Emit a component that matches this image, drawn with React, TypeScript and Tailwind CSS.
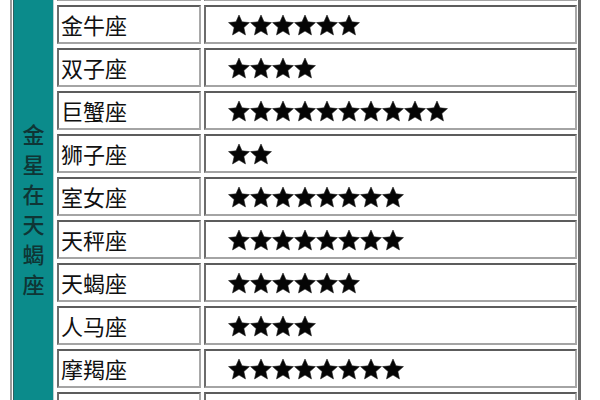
import React from "react";

const rows: [string, number][] = [
  ["白羊座", 6],
  ["金牛座", 6],
  ["双子座", 4],
  ["巨蟹座", 10],
  ["狮子座", 2],
  ["室女座", 8],
  ["天秤座", 8],
  ["天蝎座", 6],
  ["人马座", 4],
  ["摩羯座", 8],
  ["水瓶座", 6],
];

const vertical = ["金", "星", "在", "天", "蝎", "座"];

const cell =
  "h-[39px] flex items-center border-2 border-t-[#5c5c5c] border-l-[#6c6c6c] border-r-[#a8a8a8] border-b-[#a4a4a4] bg-white";

function Star() {
  return (
    <svg width="22" height="22" viewBox="0 0 22 22" className="shrink-0">
      <polygon
        points="11,1 14,7.87 21.46,8.6 15.85,13.58 17.47,20.9 11,17.1 4.53,20.9 6.15,13.58 0.54,8.6 8,7.87"
        fill="#050505"
        stroke="#222"
        strokeWidth="0.6"
        strokeLinejoin="round"
      />
    </svg>
  );
}

export default function App() {
  return (
    <div
      className="h-[400px] w-[600px] overflow-hidden bg-white pl-[10px]"
      style={{ fontFamily: '"Noto Sans CJK SC", "Noto Sans", sans-serif' }}
    >
      <div className="-mt-[40px] flex w-[571px] gap-[3px] border-l-2 border-r-[3px] border-l-[#9a9a9a] border-r-[#6a6a6a] px-px pt-[2px]">
        <div className="flex w-[41px] shrink-0 flex-col items-center border-l border-r border-l-[#2f5f5f] border-r-[#bcd0d0] bg-[#0b8b8b] pt-[156px] text-[22px] leading-[30px] font-medium text-[#0f3535]">
          {vertical.map((c, i) => (
            <span key={i}>{c}</span>
          ))}
        </div>
        <div className="flex flex-1 flex-col gap-[4px]">
          {rows.map(([name, n], i) => (
            <div key={i} className="flex gap-[3px]">
              <div className={`${cell} w-[144px] shrink-0 pl-[2px] text-[22px] text-[#111]`}>
                {name}
              </div>
              <div className={`${cell} flex-1 pl-[22px]`} aria-label={"★".repeat(n)}>
                {Array.from({ length: n }).map((_, k) => (
                  <Star key={k} />
                ))}
              </div>
            </div>
          ))}
        </div>
      </div>
    </div>
  );
}
